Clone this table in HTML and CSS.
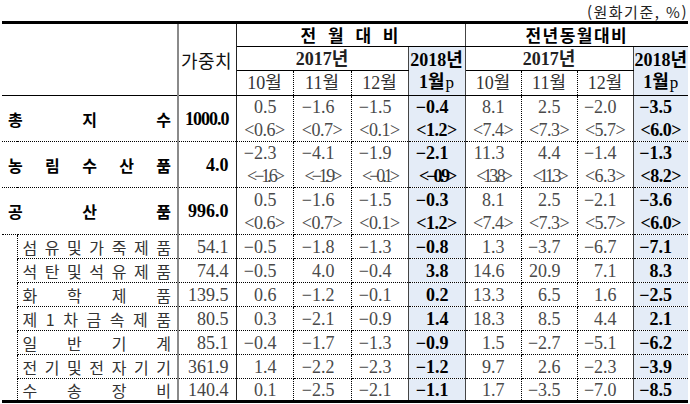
FILE: index.html
```html
<!DOCTYPE html>
<html lang="ko">
<head>
<meta charset="utf-8">
<link rel="stylesheet" href="styles.css">
</head>
<body>
<div class="unit">(원화기준, %)</div>
<table class="tbl">
  <colgroup>
    <col class="c-ind"><col class="c-lbl"><col class="c-wt">
    <col class="c-a"><col class="c-b"><col class="c-a"><col class="c-a">
    <col class="c-c"><col class="c-c"><col class="c-c"><col class="c-d">
  </colgroup>
  <thead>
    <tr class="h1">
      <th colspan="2" rowspan="3" class="blank"></th>
      <th rowspan="3" class="wt-h">가중치</th>
      <th colspan="4" class="grp g1">전 월 대 비</th>
      <th colspan="4" class="grp g2">전년동월대비</th>
    </tr>
    <tr class="h2">
      <th colspan="3" class="yr sep">2017년</th>
      <th rowspan="2" class="pcol">2018년<br>1월<span class="pp">p</span></th>
      <th colspan="3" class="yr sep">2017년</th>
      <th rowspan="2" class="pcol last">2018년<br>1월<span class="pp">p</span></th>
    </tr>
    <tr class="h3">
      <th class="mo dot">10월</th><th class="mo dot">11월</th><th class="mo sep">12월</th>
      <th class="mo dot">10월</th><th class="mo dot">11월</th><th class="mo sep">12월</th>
    </tr>
  </thead>
  <tbody>
    <tr class="big">
      <th colspan="2" class="lb"><div class="sp"><span>총</span><span>지</span><span>수</span></div></th>
      <td class="wt bold tight">1000.0</td>
      <td class="n dot"><div class="v">0.5</div><div class="k">&lt;0.6&gt;</div></td>
      <td class="n dot"><div class="v">−1.6</div><div class="k">&lt;0.7&gt;</div></td>
      <td class="n sep"><div class="v">−1.5</div><div class="k">&lt;0.1&gt;</div></td>
      <td class="n pc"><div class="v">−0.4</div><div class="k">&lt;1.2&gt;</div></td>
      <td class="n dot"><div class="v">8.1</div><div class="k">&lt;7.4&gt;</div></td>
      <td class="n dot"><div class="v">2.5</div><div class="k">&lt;7.3&gt;</div></td>
      <td class="n sep"><div class="v">−2.0</div><div class="k">&lt;5.7&gt;</div></td>
      <td class="n pc last"><div class="v">−3.5</div><div class="k">&lt;6.0&gt;</div></td>
    </tr>
    <tr class="big">
      <th colspan="2" class="lb"><div class="sp"><span>농</span><span>림</span><span>수</span><span>산</span><span>품</span></div></th>
      <td class="wt bold">4.0</td>
      <td class="n dot"><div class="v">−2.3</div><div class="k sq">&lt;−1.6&gt;</div></td>
      <td class="n dot"><div class="v">−4.1</div><div class="k sq">&lt;−1.9&gt;</div></td>
      <td class="n sep"><div class="v">−1.9</div><div class="k sq">&lt;−0.1&gt;</div></td>
      <td class="n pc"><div class="v">−2.1</div><div class="k sq">&lt;−0.9&gt;</div></td>
      <td class="n dot"><div class="v">11.3</div><div class="k sq">&lt;13.8&gt;</div></td>
      <td class="n dot"><div class="v">4.4</div><div class="k sq">&lt;11.3&gt;</div></td>
      <td class="n sep"><div class="v">−1.4</div><div class="k">&lt;6.3&gt;</div></td>
      <td class="n pc last"><div class="v">−1.3</div><div class="k">&lt;8.2&gt;</div></td>
    </tr>
    <tr class="big big3">
      <th colspan="2" class="lb"><div class="sp"><span>공</span><span>산</span><span>품</span></div></th>
      <td class="wt bold">996.0</td>
      <td class="n dot"><div class="v">0.5</div><div class="k">&lt;0.6&gt;</div></td>
      <td class="n dot"><div class="v">−1.6</div><div class="k">&lt;0.7&gt;</div></td>
      <td class="n sep"><div class="v">−1.5</div><div class="k">&lt;0.1&gt;</div></td>
      <td class="n pc"><div class="v">−0.3</div><div class="k">&lt;1.2&gt;</div></td>
      <td class="n dot"><div class="v">8.1</div><div class="k">&lt;7.4&gt;</div></td>
      <td class="n dot"><div class="v">2.5</div><div class="k">&lt;7.3&gt;</div></td>
      <td class="n sep"><div class="v">−2.1</div><div class="k">&lt;5.7&gt;</div></td>
      <td class="n pc last"><div class="v">−3.6</div><div class="k">&lt;6.0&gt;</div></td>
    </tr>
    <tr class="sub">
      <td rowspan="7" class="ind"></td>
      <th class="ls"><div class="sp"><span>섬</span><span>유</span><span>및</span><span>가</span><span>죽</span><span>제</span><span>품</span></div></th>
      <td class="wt">54.1</td>
      <td class="n dot">−0.5</td><td class="n dot">−1.8</td><td class="n sep">−1.3</td><td class="n pc">−0.8</td>
      <td class="n dot">1.3</td><td class="n dot">−3.7</td><td class="n sep">−6.7</td><td class="n pc last">−7.1</td>
    </tr>
    <tr class="sub">
      <th class="ls"><div class="sp"><span>석</span><span>탄</span><span>및</span><span>석</span><span>유</span><span>제</span><span>품</span></div></th>
      <td class="wt">74.4</td>
      <td class="n dot">−0.5</td><td class="n dot">4.0</td><td class="n sep">−0.4</td><td class="n pc">3.8</td>
      <td class="n dot">14.6</td><td class="n dot">20.9</td><td class="n sep">7.1</td><td class="n pc last">8.3</td>
    </tr>
    <tr class="sub">
      <th class="ls"><div class="sp"><span>화</span><span>학</span><span>제</span><span>품</span></div></th>
      <td class="wt">139.5</td>
      <td class="n dot">0.6</td><td class="n dot">−1.2</td><td class="n sep">−0.1</td><td class="n pc">0.2</td>
      <td class="n dot">13.3</td><td class="n dot">6.5</td><td class="n sep">1.6</td><td class="n pc last">−2.5</td>
    </tr>
    <tr class="sub">
      <th class="ls"><div class="sp"><span>제</span><span>1</span><span>차</span><span>금</span><span>속</span><span>제</span><span>품</span></div></th>
      <td class="wt">80.5</td>
      <td class="n dot">0.3</td><td class="n dot">−2.1</td><td class="n sep">−0.9</td><td class="n pc">1.4</td>
      <td class="n dot">18.3</td><td class="n dot">8.5</td><td class="n sep">4.4</td><td class="n pc last">2.1</td>
    </tr>
    <tr class="sub">
      <th class="ls"><div class="sp"><span>일</span><span>반</span><span>기</span><span>계</span></div></th>
      <td class="wt">85.1</td>
      <td class="n dot">−0.4</td><td class="n dot">−1.7</td><td class="n sep">−1.3</td><td class="n pc">−0.9</td>
      <td class="n dot">1.5</td><td class="n dot">−2.7</td><td class="n sep">−5.1</td><td class="n pc last">−6.2</td>
    </tr>
    <tr class="sub">
      <th class="ls"><div class="sp"><span>전</span><span>기</span><span>및</span><span>전</span><span>자</span><span>기</span><span>기</span></div></th>
      <td class="wt">361.9</td>
      <td class="n dot">1.4</td><td class="n dot">−2.2</td><td class="n sep">−2.3</td><td class="n pc">−1.2</td>
      <td class="n dot">9.7</td><td class="n dot">2.6</td><td class="n sep">−2.3</td><td class="n pc last">−3.9</td>
    </tr>
    <tr class="sub lastrow">
      <th class="ls"><div class="sp"><span>수</span><span>송</span><span>장</span><span>비</span></div></th>
      <td class="wt">140.4</td>
      <td class="n dot">0.1</td><td class="n dot">−2.5</td><td class="n sep">−2.1</td><td class="n pc">−1.1</td>
      <td class="n dot">1.7</td><td class="n dot">−3.5</td><td class="n sep">−7.0</td><td class="n pc last">−8.5</td>
    </tr>
  </tbody>
</table>
</body>
</html>
```

FILE: styles.css
```css
body {
  margin: 0;
  background: #ffffff;
  font-family: "Liberation Serif", "Noto Sans CJK KR", serif;
  color: #000;
}

.unit {
  width: 688px;
  height: 21px;
  text-align: right;
  font-family: "Noto Sans CJK KR", sans-serif;
  font-size: 15px;
  line-height: 24px;
  letter-spacing: 1.5px;
  color: #222;
}

.tbl {
  margin-left: 2px;
  width: 686px;
  border-collapse: collapse;
  table-layout: fixed;
  border-top: 3px solid #000;
}

.c-ind { width: 15px; }
.c-lbl { width: 161px; }
.c-wt { width: 58px; }
.c-a { width: 57px; }
.c-b { width: 58px; }
.c-c { width: 56px; }
.c-d { width: 55px; }

th, td {
  padding: 0;
  overflow: hidden;
  white-space: nowrap;
  line-height: 20px;
}

/* header */
.h1 { height: 24px; }
.h2 { height: 24px; }
.h3 { height: 25px; }

.blank {
  border-bottom: 1px solid #000;
}

.wt-h {
  border-left: 2px solid #8a8a8a;
  border-right: 1px solid #222;
  border-bottom: 1px solid #000;
  font-family: "Noto Sans CJK KR", sans-serif;
  font-weight: normal;
  font-size: 18px;
  letter-spacing: 0.5px;
  text-align: left;
  padding-left: 2px;
  color: #111;
}

.grp {
  border-bottom: 1px solid #000;
  font-family: "Noto Sans CJK KR", sans-serif;
  font-weight: bold;
  font-size: 17px;
  text-align: center;
}
.g1 { letter-spacing: 2px; word-spacing: 3px; border-right: 1px solid #444; }
.g2 { letter-spacing: 1.5px; }

.yr {
  border-bottom: 1px solid #000;
  font-size: 18px;
  font-weight: bold;
  text-align: center;
  color: #222;
}

.pcol {
  background: #e4ecf7;
  border-left: 1px solid #444;
  border-right: 1px solid #444;
  border-bottom: 1px solid #000;
  font-size: 18px;
  font-weight: bold;
  line-height: 22px;
  text-align: center;
  vertical-align: top;
  padding-top: 2px;
}
.pcol.last { border-right: none; }
.pp { font-weight: normal; font-size: 17px; margin-left: 1px; }

.mo {
  border-bottom: 1px solid #000;
  font-size: 18px;
  font-weight: normal;
  text-align: center;
  color: #333;
}

.dot { border-right: 1px dotted #000; }
.sep { border-right: 1px solid #444; }

/* body */
.big { height: 46px; }
.big3 { height: 47px; }
.sub { height: 24px; }
.sub.lastrow { height: 23px; }

.big > th, .big > td {
  border-bottom: 1px dotted #000;
}
.sub > th, .sub > td {
  border-bottom: 1px dotted #000;
}
.sub.lastrow > th, .sub.lastrow > td, .sub > .ind {
  border-bottom: 3px solid #000;
}

.lb {
  font-family: "Noto Sans CJK KR", sans-serif;
  font-weight: bold;
  font-size: 16px;
  padding: 0 6px 0 6px;
}
.ls {
  border-left: 1px dotted #000;
  font-family: "Noto Sans CJK KR", sans-serif;
  font-weight: normal;
  font-size: 16px;
  color: #333;
  padding: 0 6px 0 5px;
}
.sp {
  display: flex;
  justify-content: space-between;
  align-items: center;
}

.wt {
  border-left: 2px solid #8a8a8a;
  border-right: 1px solid #222;
  text-align: right;
  padding-right: 7px;
  font-size: 18px;
  color: #444;
}
.wt.bold { font-weight: bold; color: #000; }
.wt.tight { letter-spacing: -1px; }

.n {
  font-size: 18px;
  text-align: right;
  padding-right: 16px;
  color: #4a4a4a;
}
.n.pc {
  background: #e4ecf7;
  font-weight: bold;
  color: #000;
  border-left: 1px solid #444;
  border-right: 1px solid #444;
}
.n.pc.last { border-right: none; }

.n .v {
  height: 23px;
  line-height: 23px;
}
.n .k {
  height: 22px;
  line-height: 22px;
  text-align: center;
  margin-right: -16px;
  letter-spacing: -0.5px;
}
.n .k.sq { letter-spacing: -3px; }
```
